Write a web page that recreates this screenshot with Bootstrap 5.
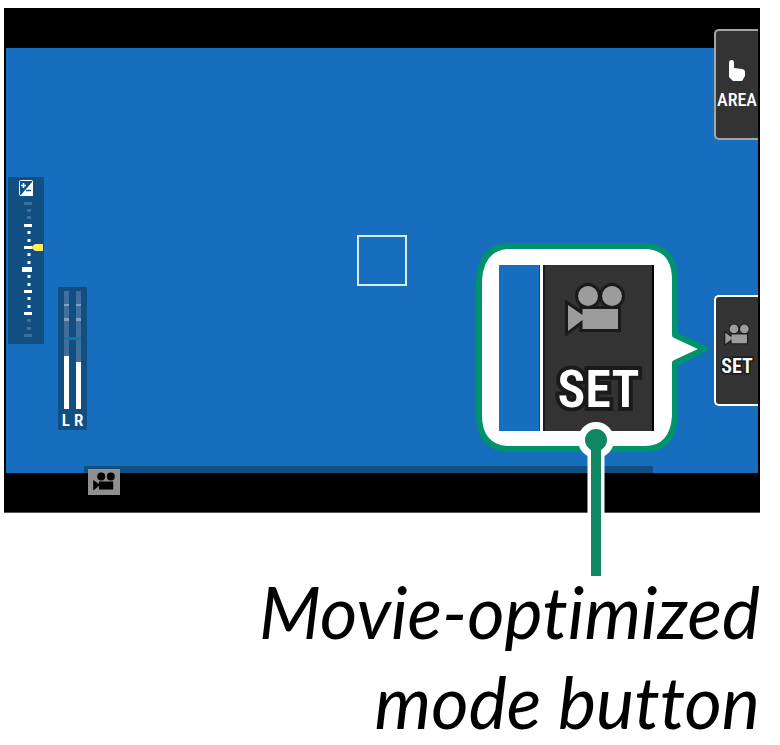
<!DOCTYPE html>
<html lang="en">
<head>
<meta charset="utf-8">
<meta name="viewport" content="width=device-width, initial-scale=1">
<title>Movie-optimized mode button</title>
<link href="https://cdn.jsdelivr.net/npm/bootstrap@5.3.0/dist/css/bootstrap.min.css" rel="stylesheet">
<style>
  :root { --lcd: #176ebe; --shade: #114e82; --key: #333333; }
  body { background: #fff; color: #000; }
  .guide { padding: 8px 20px 0 4px; }
  .lcd { background: #000; padding: 0 2px; border-bottom: 1px solid #555; }
  .mask-top { height: 40px; }
  .mask-bottom { height: 39px; }
  .scene { background: var(--lcd); height: 425px; }
  .lcd svg { display: block; }
  .exposure { left: 2px; top: 129px; width: 36px; height: 167px; background: var(--shade); }
  .levels { left: 52px; top: 239px; width: 29px; height: 143px; background: var(--shade); }
  .cond { font-family: "Roboto Condensed", "Liberation Sans Narrow", "Liberation Sans", sans-serif; font-weight: 600; color: #fff; }
  .levels .cond { font-size: 17px; line-height: 18px; }
  .focus-box { left: 351px; top: 187px; width: 50px; height: 51px; border: 2px solid #dcebf8; }
  .timeline { left: 78px; right: 105px; bottom: 0; height: 7px; background: var(--shade); }
  .mode-chip { left: 82px; bottom: -22px; width: 32px; height: 26px; background: #8f8f8e; }
  .soft-key { right: 0; width: 44px; height: 111px; padding: 0; background: var(--key); border: 2px solid #fff; border-right: 0; border-radius: 5px 0 0 5px; line-height: 20px; }
  .key-area { top: -19px; border-color: #a5a5a5; font-size: 18px; font-weight: 500; }
  .key-set { top: 247px; font-size: 20px; padding-bottom: 4px; }
  .outlined { -webkit-text-stroke: 3px #1b1a19; paint-order: stroke fill; }
  .callout { right: 46px; top: 195px; width: 236px; height: 209px; }
  .magnified { left: 23px; top: 22px; width: 155px; height: 166px; }
  .mag-scene { background: var(--lcd); width: 41px; border-right: 1px solid var(--shade); }
  .mag-edge { background: #fff; width: 3px; }
  .mag-key { background: var(--key); border-left: 2px solid #1b1a19; border-right: 2px solid #000; padding-top: 15px; }
  .mag-label { font-size: 52px; line-height: 60px; margin-top: 20px; -webkit-text-stroke: 8px #1b1a19; paint-order: stroke fill; }
  .leader { right: 144px; top: 373px; width: 36px; height: 155px; }
  .legend { font-family: Lato, "Open Sans", sans-serif; font-style: italic; font-size: 72px; line-height: 90px; font-variant-ligatures: none; padding-top: 53px; }
</style>
<script src="https://cdn.jsdelivr.net/npm/bootstrap@5.3.0/dist/js/bootstrap.bundle.min.js"></script>
</head>
<body>
<svg class="position-absolute" width="0" height="0" aria-hidden="true">
  <symbol id="cine" viewBox="0 0 64 60">
    <circle cx="25" cy="16" r="10"/><circle cx="49" cy="16" r="10"/>
    <path d="M19.500 29H55V49H19.500V40L5 51V25L19.500 35Z"/>
  </symbol>
</svg>
<main class="guide">
<figure class="m-0">
  <div class="lcd">
    <div class="mask-top"></div>
    <div class="scene position-relative">

      <div class="exposure position-absolute">
        <svg width="36" height="167" viewBox="8 177 36 167" role="img" aria-label="Exposure compensation">
          <rect x="19.500" y="180.500" width="13" height="15" rx="1" fill="#114e82" stroke="#fff"/>
          <path d="M33 181V196H20Z" fill="#fff"/>
          <path d="M21 185.500h5M23.500 183v5" stroke="#fff" stroke-width="1.500"/>
          <path d="M26 190.500h5" stroke="#114e82" stroke-width="1.500"/>
          <path fill="#3c6f9c" d="M24 202h8v3h-8zM27 209h4v3h-4zM27 216h4v3h-4zM27 319h4v3h-4zM27 327h4v3h-4zM24 334h8v3h-8z"/>
          <path fill="#fff" d="M24 224h8v3h-8zM27.500 231h3v3h-3zM27.500 239h3v3h-3zM24 246h8v3h-8zM27.500 253h3v3h-3zM27.500 261h3v3h-3zM22 267h10v5h-10zM27.500 275h3v3h-3zM27.500 283h3v3h-3zM24 290h8v3h-8zM27.500 297h3v3h-3zM27.500 305h3v3h-3zM24 312h8v3h-8z"/>
          <path fill="#ffec5a" d="M31 247.500L35 244H43V251H35Z"/>
        </svg>
      </div>

      <div class="levels position-absolute">
        <svg width="29" height="124" viewBox="58 287 29 124" role="img" aria-label="Recording level">
          <path fill="#416f9b" d="M64 291h5v70h-5zM76 291h5v72h-5z"/>
          <path fill="#82a1be" d="M64 304h5v2h-5zM76 304h5v2h-5zM64 318h5v3h-5zM76 318h5v3h-5z"/>
          <path fill="#0b79a0" d="M64 337h17v3h-17z"/>
          <path fill="#fff" d="M64 356h5v53h-5zM76 362h5v47h-5z"/>
        </svg>
        <div class="cond d-flex justify-content-center gap-1"><span>L</span><span>R</span></div>
      </div>

      <div class="focus-box position-absolute"></div>
      <div class="timeline position-absolute"></div>
      <div class="mode-chip position-absolute d-flex align-items-center justify-content-center">
        <svg width="26" height="24" viewBox="0 0 64 60" role="img" aria-label="Movie mode"><use href="#cine"/></svg>
      </div>

      <button type="button" class="soft-key key-area cond position-absolute d-flex flex-column align-items-center justify-content-center">
        <svg class="mb-2" width="18" height="22" viewBox="0 0 18 22" fill="#fff" aria-hidden="true"><path d="M1 3Q1 0 3.500 0Q6 0 6 3V8L14 9Q17 9.500 17 12V16L14 21H5L1 17Z"/></svg>
        AREA
      </button>

      <button type="button" class="soft-key key-set cond position-absolute d-flex flex-column align-items-center justify-content-center">
        <svg class="mb-2" width="28" height="26" viewBox="0 0 64 60" fill="#9c9c9c" stroke="#1b1a19" stroke-width="5" paint-order="stroke" aria-hidden="true"><use href="#cine"/></svg>
        <span class="outlined">SET</span>
      </button>

      <div class="callout position-absolute">
        <svg width="236" height="209" viewBox="0 0 236 209" aria-hidden="true">
          <path d="M31 3H171Q199 5 199 37V92L229 106L199 120V173Q197 206 169 206H31Q3 204 3 172V37Q5 5 31 3Z" fill="#fff" stroke="#00926c" stroke-width="6" stroke-linejoin="round"/>
        </svg>
        <div class="magnified position-absolute d-flex">
          <div class="mag-scene flex-shrink-0"></div>
          <div class="mag-edge flex-shrink-0"></div>
          <div class="mag-key flex-grow-1 d-flex flex-column align-items-center">
            <svg class="me-2" width="64" height="60" viewBox="0 0 64 60" fill="#9c9c9c" stroke="#1b1a19" stroke-width="6" paint-order="stroke" aria-hidden="true"><use href="#cine"/></svg>
            <span class="mag-label cond">SET</span>
          </div>
        </div>
      </div>

      <svg class="leader position-absolute" viewBox="0 0 36 155" aria-hidden="true">
        <path d="M18 19V155" stroke="#fff" stroke-width="17"/><circle cx="18" cy="19" r="18" fill="#fff"/>
        <path d="M18 19V155" stroke="#118663" stroke-width="10"/><circle cx="18" cy="19" r="11" fill="#118663"/>
      </svg>
    </div>
    <div class="mask-bottom"></div>
  </div>
  <figcaption class="legend text-end">Movie-optimized<br>mode button</figcaption>
</figure>
</main>
</body>
</html>
